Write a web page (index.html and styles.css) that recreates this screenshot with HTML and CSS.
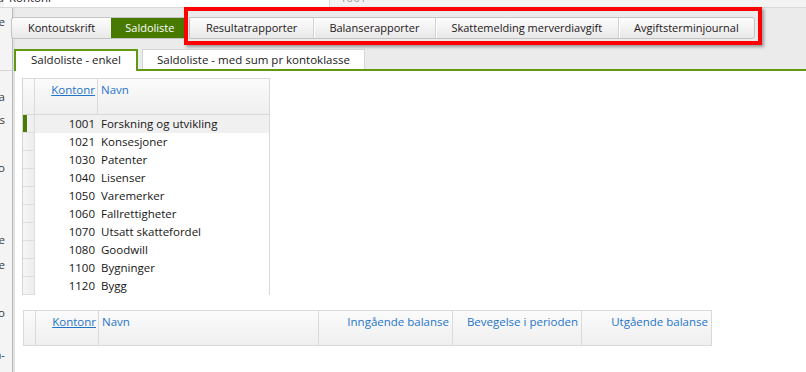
FILE: index.html
```html
<!DOCTYPE html>
<html lang="no">
<head>
<meta charset="utf-8">
<title>Saldoliste</title>
<link rel="stylesheet" href="styles.css">
</head>
<body>
<div class="topstrip">
  <div class="ts-corner"><span>a</span></div>
  <div class="ts-field"><span>Kontonr</span></div>
  <div class="ts-value"><span>1001</span></div>
</div>
<div class="app">
  <aside class="side">
    <div class="side-top">
      <div class="slabel l1"><span>Periode</span></div>
    </div>
    <div class="side-body">
      <div class="slabel l2"><span>Skala</span></div>
      <div class="slabel l3"><span>Vis</span></div>
      <div class="slabel l4"><span>Fra konto</span></div>
      <div class="slabel l5"><span>Til periode</span></div>
      <div class="slabel l6"><span>Type</span></div>
      <div class="slabel l7"><span>Konto</span></div>
      <div class="slabel l8"><span>Fra-</span></div>
    </div>
  </aside>
  <div class="sep"></div>
  <main class="main">
    <div class="toolbar">
      <div class="btngroup first">
        <div class="btn">Kontoutskrift</div>
        <div class="btn active">Saldoliste</div>
      </div>
      <div class="btngroup second">
        <div class="btn">Resultatrapporter</div>
        <div class="btn">Balanserapporter</div>
        <div class="btn">Skattemelding merverdiavgift</div>
        <div class="btn">Avgiftsterminjournal</div>
      </div>
    </div>
    <div class="tabs">
      <div class="tab active">Saldoliste - enkel</div>
      <div class="tab">Saldoliste - med sum pr kontoklasse</div>
    </div>
    <div class="content">
      <div class="grid g1">
        <div class="ghead">
          <div class="hc sel"></div>
          <div class="hc num"><span class="link">Kontonr</span></div>
          <div class="hc name">Navn</div>
        </div>
        <div class="grow selected"><div class="rc sel"><span class="mark"></span></div><div class="rc num">1001</div><div class="rc name">Forskning og utvikling</div></div>
        <div class="grow"><div class="rc sel"></div><div class="rc num">1021</div><div class="rc name">Konsesjoner</div></div>
        <div class="grow"><div class="rc sel"></div><div class="rc num">1030</div><div class="rc name">Patenter</div></div>
        <div class="grow"><div class="rc sel"></div><div class="rc num">1040</div><div class="rc name">Lisenser</div></div>
        <div class="grow"><div class="rc sel"></div><div class="rc num">1050</div><div class="rc name">Varemerker</div></div>
        <div class="grow"><div class="rc sel"></div><div class="rc num">1060</div><div class="rc name">Fallrettigheter</div></div>
        <div class="grow"><div class="rc sel"></div><div class="rc num">1070</div><div class="rc name">Utsatt skattefordel</div></div>
        <div class="grow"><div class="rc sel"></div><div class="rc num">1080</div><div class="rc name">Goodwill</div></div>
        <div class="grow"><div class="rc sel"></div><div class="rc num">1100</div><div class="rc name">Bygninger</div></div>
        <div class="grow"><div class="rc sel"></div><div class="rc num">1120</div><div class="rc name">Bygg</div></div>
      </div>
      <div class="grid g2">
        <div class="ghead">
          <div class="hc sel"></div>
          <div class="hc num"><span class="link">Kontonr</span></div>
          <div class="hc name">Navn</div>
          <div class="hc amt">Inngående balanse</div>
          <div class="hc amt">Bevegelse i perioden</div>
          <div class="hc amt last">Utgående balanse</div>
        </div>
      </div>
    </div>
  </main>
</div>
<div class="highlight"></div>
</body>
</html>
```
FILE: styles.css
```css
* { box-sizing: border-box; }

body {
  margin: 0;
  width: 806px;
  height: 372px;
  overflow: hidden;
  position: relative;
  background: #ffffff;
  font-family: "Open Sans", "Noto Sans", sans-serif;
  font-size: 11.5px;
  color: #1b1b1b;
}

/* top strip (bottom of a scrolled-away form row) */
.topstrip {
  display: flex;
  height: 8px;
  overflow: hidden;
  background: #f3f3f3;
  border-bottom: 1px solid #d9d9d9;
}
.topstrip span {
  display: block;
  line-height: 16px;
  margin-top: -10px;
  white-space: nowrap;
}
.ts-corner {
  width: 4px;
  overflow: hidden;
  display: flex;
  justify-content: flex-end;
  color: #333;
}
.ts-field {
  width: 326px;
  background: #ffffff;
  border-right: 1px solid #dadada;
  padding-left: 5px;
  color: #222;
}
.ts-value {
  flex: 1;
  padding-left: 10px;
  color: #9a9a9a;
}

.app {
  display: flex;
  height: 364px;
}

/* left, clipped form panel */
.side {
  width: 13px;
  background: #f4f4f4;
  border-right: 1px solid #b9b9b9;
  display: flex;
  flex-direction: column;
}
.side-top {
  height: 63px;
  border-bottom: 1px solid #d4d4d4;
}
.slabel {
  width: 5px;
  height: 16px;
  line-height: 16px;
  overflow: hidden;
  display: flex;
  justify-content: flex-end;
  color: #3a3a3a;
  white-space: nowrap;
}
.l1 { margin-top: 6px; }
.l2 { margin-top: 18px; }
.l3 { margin-top: 7px; }
.l4 { margin-top: 32px; }
.l5 { margin-top: 56px; }
.l6 { margin-top: 9px; }
.l7 { margin-top: 32px; }
.l8 { margin-top: 26px; }

.sep {
  width: 2px;
  background: #e2e2e2;
}

.main {
  flex: 1;
  display: flex;
  flex-direction: column;
  background: #ebebeb;
}

/* top button bar */
.toolbar {
  display: flex;
  gap: 2px;
  margin: 9px 0 0 -4px;
  height: 22px;
  position: relative;
  font-size: 11px;
}
.btngroup {
  display: flex;
  border: 1px solid #c4c4c4;
  border-radius: 3px;
  overflow: hidden;
  background: linear-gradient(#fdfdfd, #e8e8e8);
}
.btngroup.first {
  border-top-right-radius: 0;
  border-bottom-right-radius: 0;
  border-right: none;
}
.btngroup.second {
  border-top-left-radius: 0;
  border-bottom-left-radius: 0;
}
.btn {
  line-height: 20px;
  padding: 0 15.5px;
  white-space: nowrap;
  color: #1d1620;
}
.btngroup.first .btn { padding: 0 16px; }
.btn + .btn {
  border-left: 1px solid #d2d2d2;
  box-shadow: inset 1px 0 0 #ffffff;
}
.btngroup.first .btn.active {
  background: #487a02;
  color: #ffffff;
  border-left-color: #487a02;
  box-shadow: none;
  padding: 0 13px;
}

/* second level tabs */
.tabs {
  display: flex;
  gap: 4px;
  margin: 10px 0 0 -1px;
  height: 22px;
  border-bottom: 2px solid #5f9a12;
}
.tab {
  height: 20px;
  line-height: 19px;
  padding: 0 14px;
  background: #ffffff;
  border: 1px solid #d6d6d6;
  border-bottom: none;
  white-space: nowrap;
  color: #1a1a1a;
}
.tab.active {
  height: 22px;
  margin-bottom: -2px;
  border: 2px solid #5f9a12;
  border-bottom: none;
  padding: 0 15px;
  line-height: 18px;
}

/* content area */
.content {
  flex: 1;
  background: #ffffff;
  padding: 7px 0 0 7px;
}

.grid {
  display: flex;
  flex-direction: column;
}
.ghead {
  display: grid;
  height: 37px;
  border-top: 1px solid #d9d9d9;
  border-bottom: 1px solid #d9d9d9;
  background: linear-gradient(#fbfbfb, #efefef);
}
.hc {
  padding: 3px 3px 0 3px;
  line-height: 16px;
  color: #1f75c8;
  border-right: 1px solid #dadada;
  white-space: nowrap;
}
.hc.sel { padding: 0; }
.hc.num, .hc.amt { text-align: right; padding-right: 2px; }
.hc.amt { padding-right: 3px; }
.hc.last { border-right: none; }
.link { text-decoration: underline; }

.g1 {
  width: 248px;
  border-left: 1px solid #d3d3d3;
  border-right: 1px solid #d9d9d9;
}
.g1 .ghead,
.g1 .grow {
  grid-template-columns: 12px 63px 1fr;
}
.g1 .hc.name { border-right: none; }

.grow {
  display: grid;
  height: 18px;
  line-height: 18px;
}
.rc { white-space: nowrap; color: #161616; }
.rc.sel {
  position: relative;
  background: linear-gradient(90deg, #f6f6f6, #ededed);
  border-right: 1px solid #dedede;
  border-bottom: 1px solid #dedede;
}
.rc.num { text-align: right; padding-right: 3px; }
.rc.name { padding-left: 3px; }
.grow.selected .rc.num,
.grow.selected .rc.name { background: #f0f0f0; }
.mark {
  position: absolute;
  left: 0;
  top: 0;
  width: 4px;
  height: 17px;
  background: #4b7d05;
}

.g2 {
  width: 689px;
  margin: 15px 0 0 1px;
  border-left: 1px solid #d9d9d9;
  border-right: 1px solid #d9d9d9;
}
.g2 .ghead {
  height: 36px;
  grid-template-columns: 12px 63px 220px 134px 129px 1fr;
}

/* red annotation frame over the report buttons */
.highlight {
  position: absolute;
  left: 184px;
  top: 7px;
  width: 578px;
  height: 38px;
  border: 4px solid #ff0000;
  box-shadow: 2px 2px 3px rgba(0, 0, 0, 0.35);
}
```
